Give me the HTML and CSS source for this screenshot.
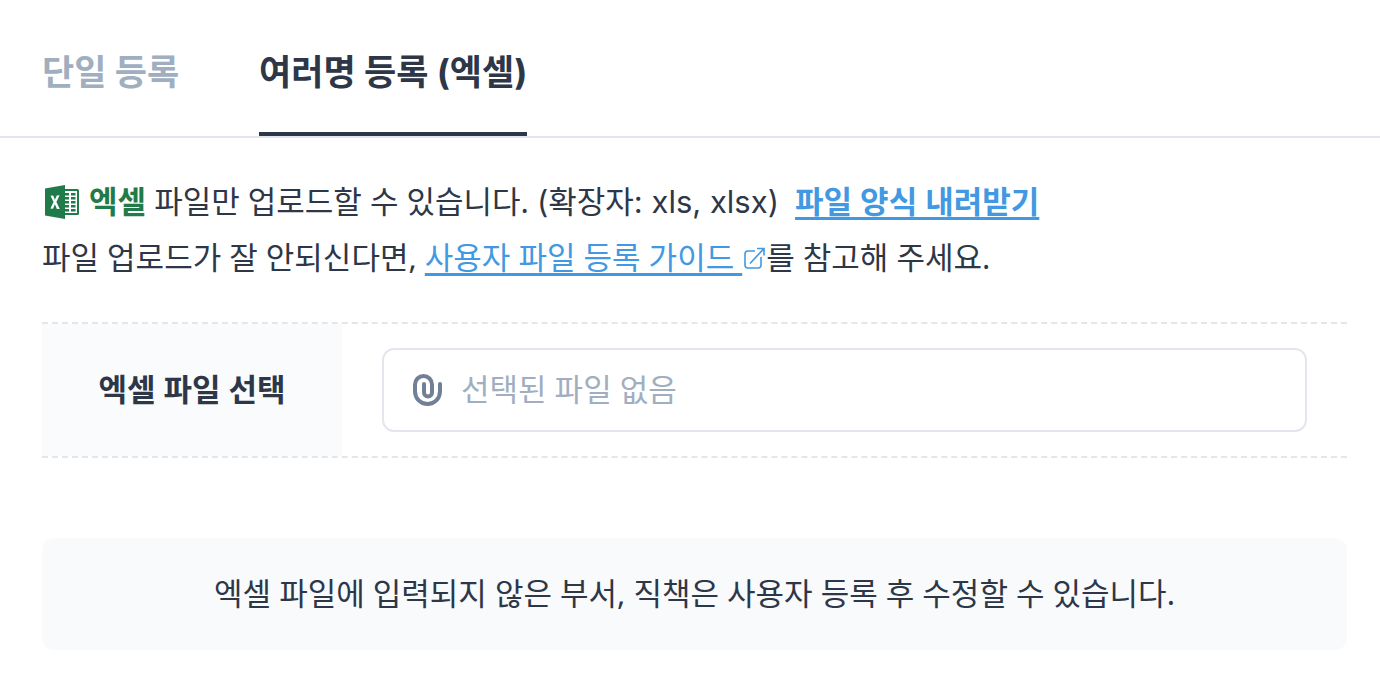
FILE: index.html
```html
<!DOCTYPE html>
<html lang="ko">
<head>
<meta charset="utf-8">
<meta name="viewport" content="width=device-width, initial-scale=1">
<title>여러명 등록 (엑셀)</title>
<link rel="stylesheet" href="styles.css">
</head>
<body>
<nav class="tabs" role="tablist">
  <button class="tab" type="button" role="tab" aria-selected="false">단일 등록</button>
  <button class="tab tab-active" type="button" role="tab" aria-selected="true">여러명 등록 (엑셀)</button>
</nav>
<main class="content">
  <div class="guide">
    <p class="guide-line">
      <svg class="excel-icon" viewBox="0 0 36 34" aria-hidden="true">
        <path d="M19 4h13.500q1.500 0 1.500 1.500v23q0 1.500-1.500 1.500H19z" fill="#1f7b49"/>
        <path d="M20 6h12v22H20z" fill="#fff"/>
        <path d="M20 8h4v2.500h-4zM26 8h4.500v2.500H26zM20 12h4v2.500h-4zM26 12h4.500v2.500H26zM20 16h4v2.500h-4zM26 16h4.500v2.500H26zM20 20h4v2.500h-4zM26 20h4.500v2.500H26zM20 24h4v2.500h-4zM26 24h4.500v2.500H26z" fill="#1f7b49"/>
        <path d="M0 3.500 20 0v34L0 30.500z" fill="#1f7b49"/>
        <path d="M5.500 10.800l2.700-.2 1.700 4.100 1.900-4.300 2.800-.2-3.200 6.800 3.400 7.100-2.900-.2-2-4.600-1.900 4.400-2.600-.2 3.100-6.500z" fill="#fff"/>
      </svg>
      <strong class="excel">엑셀</strong> 파일만 업로드할 수 있습니다. <span class="extensions">(확장자: xls, xlsx)</span>
      <a class="link link-download" href="#">파일 양식 내려받기</a>
    </p>
    <p class="guide-line">파일 업로드가 잘 안되신다면, <a class="link" href="#">사용자 파일 등록 가이드&nbsp;</a><svg class="external-icon" viewBox="0 0 24 24" aria-hidden="true"><path d="M13 5H6Q3 5 3 8v11q0 3 3 3h10q3 0 3-3v-8M8 17.500 21.500 3M15 2.500h7v7"/></svg>를 참고해 주세요.</p>
  </div>
  <form class="file-row">
    <label class="file-label" for="excel-file">엑셀 파일 선택</label>
    <div class="file-cell">
      <div class="file-box">
        <svg class="clip-icon" viewBox="0 0 30 34" aria-hidden="true"><path d="M11 11v8.500a4 4 0 0 0 8 0V11.500a8.500 8.500 0 0 0-17 0v7a12.500 12.500 0 0 0 25 0V11"/></svg>
        <input class="file-input" id="excel-file" type="text" placeholder="선택된 파일 없음" readonly>
      </div>
    </div>
  </form>
  <p class="notice">엑셀 파일에 입력되지 않은 부서, 직책은 사용자 등록 후 수정할 수 있습니다.</p>
</main>
</body>
</html>
```
FILE: styles.css
```css
* {
  box-sizing: border-box;
}

body {
  margin: 0;
  background: #fff;
  color: #2d3748;
  font-family: "Noto Sans", "Noto Sans CJK KR", sans-serif;
  font-size: 31px;
  line-height: 56px;
}

p {
  margin: 0;
}

.tabs {
  display: flex;
  gap: 80px;
  padding: 0 42px;
  border-bottom: 2px solid #e2e6f0;
}

.tab {
  padding: 44px 0 32px;
  border: 0;
  border-bottom: 4px solid transparent;
  background: none;
  color: #a0aec0;
  font: inherit;
  font-family: Inter, "Noto Sans CJK KR", sans-serif;
  font-size: 35px;
  font-weight: 700;
  cursor: pointer;
}

.tab-active {
  border-bottom-color: #2d3748;
  color: #2d3748;
}

.content {
  padding: 35px 33px 34px 42px;
}

.excel-icon {
  width: 36px;
  height: 34px;
  margin-left: 3px;
  vertical-align: -6px;
}

.excel {
  color: #1f7b49;
}

.extensions {
  font-family: Inter, "Noto Sans CJK KR", sans-serif;
  line-height: 1;
}

.link {
  color: #4299e1;
  text-decoration-thickness: 3px;
  text-underline-offset: 4px;
}

.link-download {
  margin-left: 8px;
  font-weight: 700;
}

.external-icon {
  width: 24px;
  height: 24px;
  vertical-align: -1px;
  fill: none;
  stroke: #4299e1;
  stroke-width: 1.6;
}

.file-row {
  display: flex;
  margin: 37px 0 80px;
  border: dashed #e4e7ea;
  border-width: 2px 0;
}

.file-label {
  display: flex;
  flex: 0 0 300px;
  align-items: center;
  justify-content: center;
  padding-bottom: 2px;
  background: #f9fbfc;
  font-weight: 700;
}

.file-cell {
  flex: 1;
  padding: 24px 40px;
}

.file-box {
  display: flex;
  align-items: center;
  gap: 18px;
  height: 84px;
  padding: 0 29px;
  border: 2px solid #e3e6ee;
  border-radius: 12px;
}

.clip-icon {
  flex: none;
  width: 30px;
  height: 34px;
  fill: none;
  stroke: #718096;
  stroke-width: 4;
  stroke-linecap: round;
}

.file-input {
  flex: 1;
  min-width: 0;
  padding: 0 0 2px;
  border: 0;
  outline: 0;
  background: none;
  color: inherit;
  font: inherit;
}

.file-input::placeholder {
  color: #a0aec0;
}

.notice {
  padding: 27px 28px 29px;
  border-radius: 12px;
  background: #f9fafc;
  text-align: center;
}
```
